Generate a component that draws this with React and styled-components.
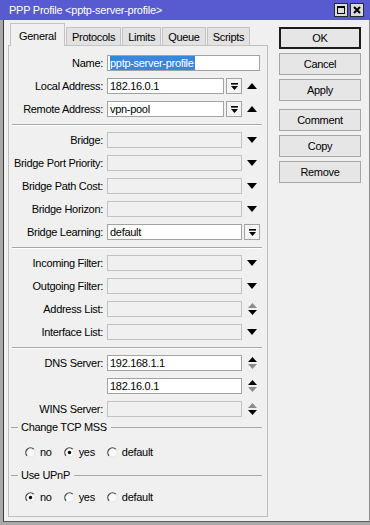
import React from 'react';
import styled, {createGlobalStyle} from 'styled-components';

const GlobalStyle = createGlobalStyle`
    body {
        margin: 0;
        background: #b9b9b9;
    }
`;

const Window = styled.div`
    width: 370px;
    height: 525px;
    background: #a9a9a9;
    display: flex;
    flex-direction: column;
    font-family: "Liberation Sans", Arial, sans-serif;
    font-size: 11px;
    letter-spacing: -0.3px;
    color: #000;
    overflow: hidden;
`;

const TitleBar = styled.div`
    height: 20px;
    flex: none;
    background: #585bcf;
    display: flex;
    align-items: center;
    padding: 0 6px 0 9px;
`;

const Title = styled.div`
    color: #fff;
    flex: 1;
    letter-spacing: -0.25px;
`;

const TitleButton = styled.div`
    width: 12px;
    height: 12px;
    margin-left: 2px;
    background: #dcdcdc;
    border: 1px solid #2a2a2a;
    display: flex;
    align-items: center;
    justify-content: center;
`;

const Frame = styled.div`
    height: 501px;
    margin-left: 3px;
    background: #f0f0f0;
    border-left: 1px solid #3a3a3a;
    border-right: 1px solid #8a8a8a;
    border-bottom: 1px solid #5a5a5a;
    display: flex;
`;

const LeftCol = styled.div`
    padding: 3px 0 0 4px;
    display: flex;
    flex-direction: column;
`;

const Tabs = styled.div`
    display: flex;
    align-items: flex-end;
    height: 23px;
    margin-left: 2px;
    position: relative;
    z-index: 1;
    margin-bottom: -1px;
`;

const Tab = styled.div`
    height: ${p => (p.$active ? '23px' : '19px')};
    box-sizing: border-box;
    padding: ${p => (p.$active ? '1px 8px 0' : '1px 5px 0')};
    margin-right: 1px;
    display: flex;
    align-items: center;
    background: ${p => (p.$active ? '#f0f0f0' : '#e2e2e2')};
    border: 1px solid #c4c4c4;
    border-bottom: ${p => (p.$active ? 'none' : '1px solid #c4c4c4')};
`;

const Panel = styled.div`
    width: 260px;
    height: 472px;
    box-sizing: border-box;
    border: 1px solid #bdbdbd;
    background: #f0f0f0;
    display: flex;
    flex-direction: column;
`;

const Section = styled.div`
    display: flex;
    flex-direction: column;
    gap: 7px;
    padding: ${p => (p.$first ? '9px' : '6px')} 0 ${p => (p.$last ? '3px' : '7px')};
`;

const Separator = styled.div`
    height: 0;
    border-top: 1px solid #a8a8a8;
    border-bottom: 1px solid #ffffff;
    margin: 0 5px 0 3px;
`;

const Row = styled.div`
    display: flex;
    align-items: center;
    height: 16px;
`;

const Label = styled.div`
    width: 94px;
    margin-right: 4px;
    text-align: right;
    white-space: nowrap;
`;

const Field = styled.div`
    width: ${p => p.$w || 135}px;
    height: 16px;
    display: flex;
    gap: 2px;
`;

const Input = styled.div`
    flex: 1;
    height: 16px;
    box-sizing: border-box;
    border: 1px solid ${p => (p.$disabled ? '#c2c2c2' : '#a3a3a3')};
    background: ${p => (p.$disabled ? '#f0f0f0' : '#ffffff')};
    padding-left: 2px;
    display: flex;
    align-items: center;
    white-space: nowrap;
    overflow: hidden;
`;

const Selected = styled.span`
    background: #3b86d8;
    color: #fff;
    padding: 1px 1px 1px 0;
`;

const DropButton = styled.div`
    width: 16px;
    height: 16px;
    box-sizing: border-box;
    border: 1px solid #a3a3a3;
    background: #f4f4f4;
    margin-left: ${p => (p.$side ? '2px' : '0')};
    display: flex;
    align-items: center;
    justify-content: center;
`;

const ArrowCell = styled.div`
    width: 20px;
    height: 16px;
    display: flex;
    align-items: center;
    justify-content: center;
`;

const Group = styled.div`
    display: flex;
    align-items: center;
    height: 14px;
    margin: ${p => p.$top}px 5px 0 2px;

    &::before {
        content: '';
        width: 7px;
        border-top: 1px solid #a8a8a8;
        margin-right: 3px;
    }

    &::after {
        content: '';
        flex: 1;
        border-top: 1px solid #a8a8a8;
        margin-left: 4px;
    }
`;

const RadioRow = styled.div`
    display: flex;
    align-items: center;
    gap: 12px;
    height: 14px;
    margin: ${p => p.$top}px 0 0 16px;
`;

const RadioItem = styled.label`
    display: flex;
    align-items: center;
    gap: 4px;
`;

const ButtonCol = styled.div`
    display: flex;
    flex-direction: column;
    gap: 4px;
    margin: 7px 0 0 11px;
`;

const Button = styled.div`
    width: 82px;
    height: 22px;
    box-sizing: border-box;
    display: flex;
    align-items: center;
    justify-content: center;
    background: #e6e6e6;
    border: ${p => (p.$default ? '2px solid #1c1c1c' : '1px solid #a6a6a6')};
    margin-top: ${p => (p.$gapTop ? '4px' : '0')};
`;

const DropIcon = () => (
    <svg width="9" height="9" viewBox="0 0 9 9">
        <rect x="1" y="1" width="7" height="1.6" fill="#000" />
        <polygon points="1,4 8,4 4.5,8" fill="#000" />
    </svg>
);

const Up = () => (
    <svg width="10" height="6" viewBox="0 0 10 6">
        <polygon points="0,6 10,6 5,0" fill="#000" />
    </svg>
);

const Down = () => (
    <svg width="10" height="6" viewBox="0 0 10 6">
        <polygon points="0,0 10,0 5,6" fill="#000" />
    </svg>
);

const UpDown = ({top = '#000', bottom = '#000'}) => (
    <svg width="9" height="12" viewBox="0 0 9 12">
        <polygon points="0,5 9,5 4.5,0" fill={top} />
        <polygon points="0,7 9,7 4.5,12" fill={bottom} />
    </svg>
);

const Radio = ({checked}) => (
    <svg width="11" height="11" viewBox="0 0 11 11">
        <circle cx="5.5" cy="5.5" r="4.6" fill="#fafafa" />
        <path d="M8.8 2.2 A4.6 4.6 0 0 0 2.2 8.8" stroke="#4a4a4a" strokeWidth="1.3" fill="none" />
        <path d="M2.2 8.8 A4.6 4.6 0 0 0 8.8 2.2" stroke="#e4e4e4" strokeWidth="1" fill="none" />
        {checked && <circle cx="5.5" cy="5.5" r="1.7" fill="#000" />}
    </svg>
);

const Radios = ({value, top}) => (
    <RadioRow $top={top}>
        {['no', 'yes', 'default'].map(v => (
            <RadioItem key={v}>
                <Radio checked={v === value} />
                {v}
            </RadioItem>
        ))}
    </RadioRow>
);

const PlainRow = ({label, value, disabled, arrow}) => (
    <Row>
        <Label>{label}</Label>
        <Field>
            <Input $disabled={disabled}>{value}</Input>
        </Field>
        <ArrowCell>{arrow}</ArrowCell>
    </Row>
);

const PickRow = ({label, value}) => (
    <Row>
        <Label>{label}</Label>
        <Field>
            <Input>{value}</Input>
            <DropButton><DropIcon /></DropButton>
        </Field>
        <ArrowCell><Up /></ArrowCell>
    </Row>
);

const tabs = ['General', 'Protocols', 'Limits', 'Queue', 'Scripts'];

const App = () => {
    return (
        <Window>
            <GlobalStyle />
            <TitleBar>
                <Title>{'PPP Profile <pptp-server-profile>'}</Title>
                <TitleButton>
                    <svg width="8" height="8" viewBox="0 0 8 8">
                        <rect x="0.5" y="0.5" width="7" height="7" fill="none" stroke="#000" />
                        <rect x="0" y="0" width="8" height="2" fill="#000" />
                    </svg>
                </TitleButton>
                <TitleButton>
                    <svg width="8" height="8" viewBox="0 0 8 8">
                        <path d="M1 1 L7 7 M7 1 L1 7" stroke="#000" strokeWidth="2" />
                    </svg>
                </TitleButton>
            </TitleBar>
            <Frame>
                <LeftCol>
                    <Tabs>
                        {tabs.map((t, i) => (
                            <Tab key={t} $active={i === 0}>{t}</Tab>
                        ))}
                    </Tabs>
                    <Panel>
                        <Section $first>
                            <Row>
                                <Label>Name:</Label>
                                <Field $w={153}>
                                    <Input><Selected>pptp-server-profile</Selected></Input>
                                </Field>
                            </Row>
                            <PickRow label="Local Address:" value="182.16.0.1" />
                            <PickRow label="Remote Address:" value="vpn-pool" />
                        </Section>
                        <Separator />
                        <Section>
                            <PlainRow label="Bridge:" disabled arrow={<Down />} />
                            <PlainRow label="Bridge Port Priority:" disabled arrow={<Down />} />
                            <PlainRow label="Bridge Path Cost:" disabled arrow={<Down />} />
                            <PlainRow label="Bridge Horizon:" disabled arrow={<Down />} />
                            <Row>
                                <Label>Bridge Learning:</Label>
                                <Field>
                                    <Input>default</Input>
                                </Field>
                                <DropButton $side><DropIcon /></DropButton>
                            </Row>
                        </Section>
                        <Separator />
                        <Section>
                            <PlainRow label="Incoming Filter:" disabled arrow={<Down />} />
                            <PlainRow label="Outgoing Filter:" disabled arrow={<Down />} />
                            <PlainRow label="Address List:" disabled arrow={<UpDown top="#8c8c8c" />} />
                            <PlainRow label="Interface List:" disabled arrow={<Down />} />
                        </Section>
                        <Separator />
                        <Section $last>
                            <PlainRow label="DNS Server:" value="192.168.1.1" arrow={<UpDown bottom="#8c8c8c" />} />
                            <PlainRow label="" value="182.16.0.1" arrow={<UpDown bottom="#8c8c8c" />} />
                            <PlainRow label="WINS Server:" disabled arrow={<UpDown top="#8c8c8c" />} />
                        </Section>
                        <Group $top={0}>Change TCP MSS</Group>
                        <Radios value="yes" top={11} />
                        <Group $top={9}>Use UPnP</Group>
                        <Radios value="no" top={8} />
                    </Panel>
                </LeftCol>
                <ButtonCol>
                    <Button $default>OK</Button>
                    <Button>Cancel</Button>
                    <Button>Apply</Button>
                    <Button $gapTop>Comment</Button>
                    <Button>Copy</Button>
                    <Button>Remove</Button>
                </ButtonCol>
            </Frame>
        </Window>
    );
};

export default App;
